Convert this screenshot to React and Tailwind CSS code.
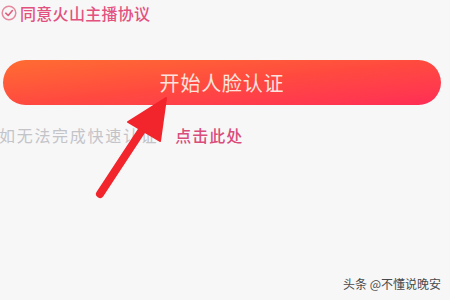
import React from 'react';

const font = { fontFamily: '"Noto Sans CJK SC", "Noto Sans", sans-serif' };

const App = () => {
    return (
        <div className="relative w-[450px] h-[300px] overflow-hidden bg-[#f7f7f8]" style={font}>
            <div className="flex items-center gap-[3px] pl-[1px] pt-[3px] h-[22px]">
                <svg width="16" height="16" viewBox="0 0 16 16" fill="none">
                    <circle cx="8" cy="8" r="6.8" stroke="#e58a9c" strokeWidth="1.5" />
                    <path d="M4.8 8.2 L7.2 10.5 L11.4 5.6" stroke="#e0607e" strokeWidth="1.6" strokeLinecap="round" strokeLinejoin="round" />
                </svg>
                <span className="text-[16px] leading-none text-[#e3517f] font-medium tracking-[0.3px]">同意火山主播协议</span>
            </div>

            <div className="mt-[38px] ml-[3px] w-[438px] h-[45px] rounded-full bg-gradient-to-br from-[#ff6c31] via-[#ff4a3f] to-[#ff2c55] flex items-center justify-center">
                <span className="text-[20px] leading-none text-[#fbe2dc] tracking-[0.8px] pt-[1px]">开始人脸认证</span>
            </div>

            <div className="flex items-center mt-[19px] h-[22px]">
                <span className="text-[16px] leading-none text-[#c4c4c8] tracking-[1.7px] -ml-[1px]">如无法完成快速认证</span>
                <span className="text-[16px] leading-none text-[#d94d7b] font-medium tracking-[1px] ml-[17px]">点击此处</span>
            </div>

            <svg className="absolute left-0 top-0" width="450" height="300" viewBox="0 0 450 300">
                <line x1="100" y1="194" x2="146" y2="124" stroke="#f2252c" strokeWidth="8" strokeLinecap="round" />
                <polygon points="166,98 128,122 160,141" fill="#f2252c" stroke="#f2252c" strokeWidth="2" strokeLinejoin="round" />
            </svg>

            <div className="absolute right-[9px] bottom-[10px] text-[12px] leading-none text-[#4a4a4a]">头条 @不懂说晚安</div>
        </div>
    );
};

export default App;
